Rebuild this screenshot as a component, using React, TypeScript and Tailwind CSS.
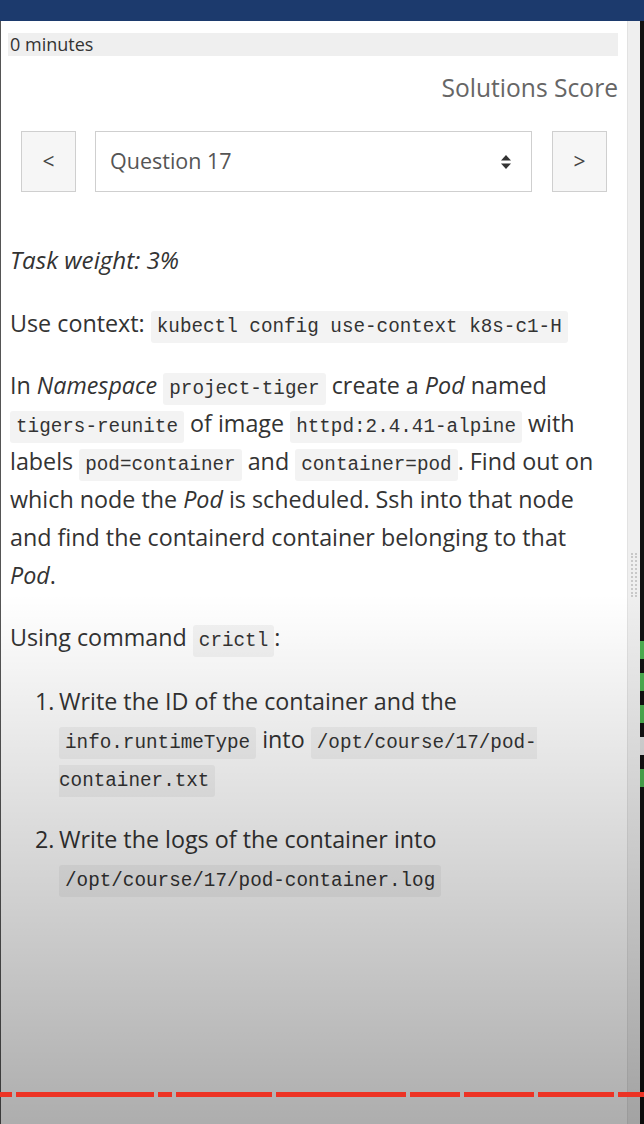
import React from "react";

const Code = ({ children }: { children: React.ReactNode }) => (
  <code className="font-['Liberation_Mono',monospace] text-[19.3px] leading-none text-[#333] bg-[#f3f3f3] px-[6px] py-[5px] rounded-[3px] [box-decoration-break:slice]">
    {children}
  </code>
);

const segments = [12, 138, 14, 96, 130, 50, 70, 76, 26];

export default function App() {
  return (
    <div className="relative w-[644px] h-[1124px] overflow-hidden bg-white flex flex-col font-['Open_Sans',sans-serif] text-[#333]">
      {/* top bar */}
      <div className="h-[21px] bg-[#1c3a6d] shrink-0" />

      <div className="flex flex-1">
        <div className="w-[1px] bg-[#555]" />

        {/* main panel */}
        <div className="w-[626px] flex flex-col">
          <div className="mt-[12px] ml-[7px] mr-[9px] h-[23px] bg-[#efefef] pl-[2px] text-[18px] leading-[23px]">
            0 minutes
          </div>

          <div className="mt-[16px] mr-[9px] text-right text-[24.6px] leading-[32px] text-[#666]">
            Solutions Score
          </div>

          {/* question nav */}
          <div className="mt-[27px] flex items-center pl-[20px] gap-[19px]">
            <button className="w-[55px] h-[61px] border border-[#cfcfcf] bg-[#f6f6f6] text-[21px] text-[#444]">
              &lt;
            </button>
            <div className="w-[437px] h-[61px] border border-[#cfcfcf] bg-white flex items-center justify-between pl-[14px] pr-[20px]">
              <span className="text-[21.5px] text-[#555]">Question 17</span>
              <svg width="10" height="14" viewBox="0 0 10 14">
                <path d="M5 0 L10 5.5 L0 5.5 Z" fill="#333" />
                <path d="M5 14 L10 8.5 L0 8.5 Z" fill="#333" />
              </svg>
            </div>
            <button className="w-[55px] h-[61px] border border-[#cfcfcf] bg-[#f6f6f6] text-[21px] text-[#444] ml-[1px]">
              &gt;
            </button>
          </div>

          {/* task body */}
          <div className="mt-[49px] pl-[9px] pr-[4px] text-[23.3px] leading-[38px]">
            <p className="italic text-[24.2px] mb-[25px]">Task weight: 3%</p>
            <p className="mb-[24px]">
              Use context: <Code>kubectl config use-context k8s-c1-H</Code>
            </p>
            <p className="mb-[24px]">
              In <i>Namespace</i> <Code>project-tiger</Code> create a <i>Pod</i> named
              <br />
              <Code>tigers-reunite</Code> of image <Code>httpd:2.4.41-alpine</Code> with
              <br />
              labels <Code>pod=container</Code> and <Code>container=pod</Code>. Find out on
              <br />
              which node the <i>Pod</i> is scheduled. Ssh into that node
              <br />
              and find the containerd container belonging to that
              <br />
              <i>Pod</i>.
            </p>
            <p className="mb-[26px]">
              Using command <Code>crictl</Code>:
            </p>
            <ol className="pl-[25px]">
              <li className="flex mb-[24px]">
                <span className="w-[24px] shrink-0">1.</span>
                <div>
                  Write the ID of the container and the
                  <br />
                  <Code>info.runtimeType</Code> into{" "}
                  <Code>
                    /opt/course/17/pod-
                    <br />
                    container.txt
                  </Code>
                </div>
              </li>
              <li className="flex">
                <span className="w-[24px] shrink-0">2.</span>
                <div>
                  Write the logs of the container into
                  <br />
                  <Code>/opt/course/17/pod-container.log</Code>
                </div>
              </li>
            </ol>
          </div>
        </div>

        {/* scrollbar */}
        <div className="w-[13px] bg-[#efefef] border-l border-[#e2e2e2] flex flex-col items-center pt-[532px]">
          <div className="w-[6px] h-[44px] border-x-2 border-dotted border-[#c8c8c8]" />
        </div>
        <div className="w-[4px] bg-[#111] flex flex-col gap-[14px] pt-[620px]">
          <div className="h-[18px] bg-[#4caf50]" />
          <div className="h-[18px] bg-[#4caf50]" />
          <div className="h-[18px] bg-[#4caf50]" />
          <div className="h-[18px] bg-[#ddd]" />
          <div className="h-[18px] bg-[#4caf50]" />
        </div>
      </div>

      {/* video player shadow */}
      <div className="pointer-events-none absolute inset-x-0 bottom-0 h-[530px] bg-linear-to-b from-transparent to-black/[0.32]" />

      {/* progress bar with chapter markers */}
      <div className="absolute left-0 right-0 top-[1092px] h-[5px] flex gap-[4px]">
        {segments.map((w, i) => (
          <div key={i} className="h-full bg-[#ec3324]" style={{ width: w }} />
        ))}
      </div>
    </div>
  );
}
